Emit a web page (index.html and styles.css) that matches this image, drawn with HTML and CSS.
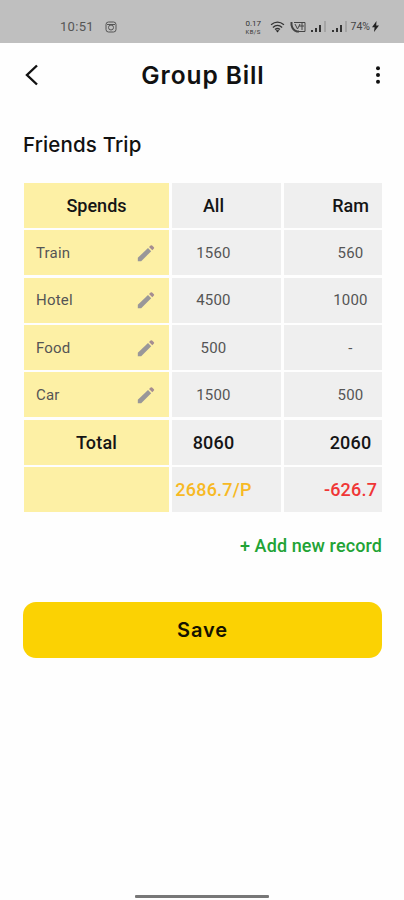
FILE: index.html
```html
<!DOCTYPE html>
<html lang="en">
<head>
    <meta charset="UTF-8">
    <meta name="viewport" content="width=device-width, initial-scale=1.0">
    <title>Group Bill</title>
    <link rel="stylesheet" href="styles.css">
</head>
<body>
    <!-- Shared icons -->
    <svg class="hidden">
        <symbol id="pencil" viewBox="0 0 18 18">
            <path fill="#999799" d="M0.8 17.200V13.800L11 4L14.200 7.200L4.200 17.200Z"/>
            <path fill="#a58d91" d="M12 3L13.600 1.500Q14.400 0.800 15.100 1.500L16.900 3.200Q17.500 3.900 16.900 4.600L15.300 6.200Z"/>
        </symbol>
        <symbol id="signal" viewBox="0 0 16 12">
            <path fill="#333" d="M0 9h2v2H0zM4 7h2v4H4zM8 4h2v7H8z"/>
            <path fill="#a5a5a5" d="M13 0h2v11h-2z"/>
        </symbol>
    </svg>

    <div class="screen">
        <!-- Status Bar -->
        <div class="status-bar">
            <div class="status-left">
                <span class="time">10:51</span>
                <svg class="insta" viewBox="0 0 12 12" fill="none" stroke="#555">
                    <rect x="1" y="1" width="10" height="10" rx="2.5"/>
                    <circle cx="6" cy="6.500" r="2.5"/>
                    <path d="M2 3.500h8"/>
                </svg>
            </div>
            <div class="status-right">
                <div class="speed"><span>0.17</span><span class="unit">KB/S</span></div>
                <svg class="wifi" viewBox="0 0 16 13" fill="none" stroke="#333" stroke-width="1.5">
                    <path d="M1 4Q8-1.5 15 4M3 7Q8 2.5 13 7M5.3 9.3Q8 7 10.7 9.3"/>
                    <path fill="#222" stroke="none" d="M6 10h4l-2 2.5z"/>
                </svg>
                <svg class="volte" viewBox="0 0 16 12" fill="none" stroke="#444">
                    <path stroke-width="2" d="M1.5 1v3q1 5 5.500 6.500h2"/>
                    <path d="M4 1.500h11v9H9M5 3l2.500 5L10 3M12 2v7M9 5h5"/>
                </svg>
                <svg class="signal"><use href="#signal"/></svg>
                <svg class="signal"><use href="#signal"/></svg>
                <span class="battery">74%</span>
                <svg class="bolt" viewBox="0 0 7 11"><path fill="#222" d="M4.500 0L0 6.200h2.600L2 11L7 4.500H4.200z"/></svg>
            </div>
        </div>

        <!-- Header -->
        <header class="header">
            <svg class="back" viewBox="0 0 14 22" fill="none" stroke="#111" stroke-width="2.400">
                <path d="M12 1.500L2 11L12 20.500"/>
            </svg>
            <h1>Group Bill</h1>
            <svg class="more" viewBox="0 0 14 18" fill="#111">
                <circle cx="11" cy="2.300" r="2"/>
                <circle cx="11" cy="9" r="2"/>
                <circle cx="11" cy="15.700" r="2"/>
            </svg>
        </header>

        <!-- Bill Section -->
        <main class="content">
            <h2>Friends Trip</h2>

            <div class="bill-table">
                <div class="cell label head">Spends</div>
                <div class="cell all head">All</div>
                <div class="cell ram head">Ram</div>

                <div class="cell label item">Train <svg class="edit"><use href="#pencil"/></svg></div>
                <div class="cell all">1560</div>
                <div class="cell ram">560</div>

                <div class="cell label item">Hotel <svg class="edit"><use href="#pencil"/></svg></div>
                <div class="cell all">4500</div>
                <div class="cell ram">1000</div>

                <div class="cell label item">Food <svg class="edit"><use href="#pencil"/></svg></div>
                <div class="cell all">500</div>
                <div class="cell ram">-</div>

                <div class="cell label item">Car <svg class="edit"><use href="#pencil"/></svg></div>
                <div class="cell all">1500</div>
                <div class="cell ram">500</div>

                <div class="cell label total">Total</div>
                <div class="cell all total">8060</div>
                <div class="cell ram total">2060</div>

                <div class="cell label"></div>
                <div class="cell all total share">2686.7/P</div>
                <div class="cell ram total due">-626.7</div>
            </div>

            <a class="add-record">+ Add new record</a>
            <button class="save">Save</button>
        </main>

        <div class="home-bar"></div>
    </div>
</body>
</html>
```
FILE: styles.css
```css
* {
    margin: 0;
    padding: 0;
    box-sizing: border-box;
}

body {
    font-family: Roboto, sans-serif;
    background-color: #fefefe;
    color: #111;
}

svg {
    display: block;
    flex-shrink: 0;
}

.hidden {
    display: none;
}

.screen {
    height: 900px;
    display: flex;
    flex-direction: column;
}

.status-bar {
    height: 43px;
    padding: 10px 25px 0 60px;
    background-color: #bfbfbf;
    display: flex;
    justify-content: space-between;
    align-items: center;
}

.status-left,
.status-right {
    display: flex;
    align-items: center;
}

.time {
    font-size: 13px;
    letter-spacing: 0.3px;
    color: #555;
}

.insta {
    width: 12px;
    height: 12px;
    margin-left: 11px;
}

.speed {
    display: flex;
    flex-direction: column;
    width: 17px;
    font-size: 8px;
    line-height: 9px;
    color: #333;
}

.unit {
    font-size: 6px;
    line-height: 7px;
    letter-spacing: 0.4px;
}

.wifi {
    width: 15px;
    height: 12px;
    margin-left: 7px;
}

.volte {
    width: 16px;
    height: 12px;
    margin-left: 5px;
}

.signal {
    width: 16px;
    height: 12px;
    margin-left: 5px;
}

.battery {
    margin-left: 3px;
    font-size: 10.5px;
    color: #444;
}

.bolt {
    width: 7px;
    height: 11px;
    margin-left: 2px;
}

.header {
    height: 64px;
    padding: 0 23px 0 25px;
    display: flex;
    justify-content: space-between;
    align-items: center;
}

.back {
    width: 14px;
    height: 22px;
}

.header h1 {
    font-family: Inter, sans-serif;
    font-size: 24.5px;
    font-weight: 600;
    letter-spacing: 0.9px;
}

.more {
    width: 14px;
    height: 18px;
}

.content {
    flex: 1;
    padding: 24px 22px 0 23px;
    display: flex;
    flex-direction: column;
}

h2 {
    font-family: Inter, sans-serif;
    font-size: 20.5px;
    font-weight: 500;
    line-height: 28px;
    letter-spacing: 0.15px;
}

.bill-table {
    margin: 24px 0 0 1px;
    display: grid;
    grid-template-columns: 145px 109px 98px;
    grid-auto-rows: 45px;
    gap: 2.35px 3px;
}

.cell {
    display: flex;
    justify-content: center;
    align-items: center;
    background-color: #efefef;
    font-size: 15px;
    letter-spacing: 0.2px;
    color: #555;
}

.label {
    background-color: #fdf0a5;
}

.item {
    justify-content: space-between;
    padding: 0 14px 0 12px;
}

.edit {
    width: 18px;
    height: 18px;
}

.all {
    padding-right: 26px;
}

.ram {
    padding-left: 35px;
}

.head,
.total {
    font-size: 18px;
    font-weight: 500;
    color: #151515;
}

.head {
    letter-spacing: 0;
}

.share {
    color: #f7b924;
}

.due {
    color: #f03636;
}

.add-record {
    align-self: flex-end;
    margin-top: 23px;
    font-size: 18px;
    font-weight: 500;
    line-height: 22px;
    letter-spacing: 0.1px;
    color: #22a335;
}

.save {
    height: 56px;
    margin-top: 45px;
    border: none;
    border-radius: 13px;
    background-color: #fbd203;
    font-family: Inter, sans-serif;
    font-size: 20px;
    font-weight: 600;
    letter-spacing: 0.9px;
    color: #151200;
    cursor: pointer;
}

.home-bar {
    width: 134px;
    height: 3px;
    margin: 0 auto 2px;
    border-radius: 1px;
    background-color: #777;
}
```
